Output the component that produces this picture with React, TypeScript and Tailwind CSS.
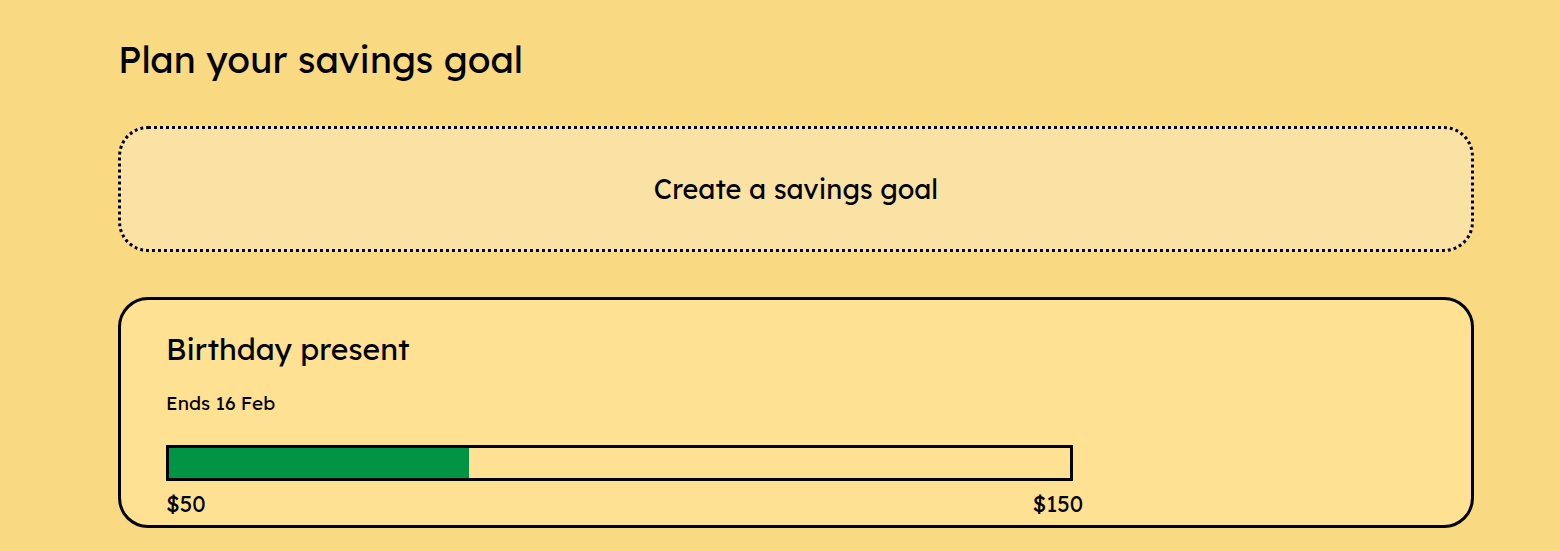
export default function App() {
  return (
    <main className="min-h-screen bg-[#f9d981] pt-9 pr-[86px] pb-6 pl-[118px] font-[Lexend,Inter,sans-serif] font-normal text-black">
      <h1 className="text-[37px] leading-[46px]">Plan your savings goal</h1>
      <button
        type="button"
        className="mt-11 block w-full rounded-[30px] border-3 border-dotted border-black bg-[#fae2a4] py-[42px] text-center text-[27px] leading-9"
      >
        Create a savings goal
      </button>
      <section className="mt-[45px] rounded-[30px] border-3 border-black bg-[#fee193] px-[45px] pt-[29px] pb-[7px]">
        <h2 className="text-[30px] leading-10">Birthday present</h2>
        <p className="mt-[22px] text-[19px] leading-6">Ends 16 Feb</p>
        <div className="w-[72%]">
          <div
            role="progressbar"
            aria-label="Birthday present"
            aria-valuemin={0}
            aria-valuemax={150}
            aria-valuenow={50}
            className="mt-[30px] h-9 border-3 border-black"
          >
            <div className="h-full w-1/3 bg-[#009444]" />
          </div>
          <div className="-mr-[10px] mt-[9px] flex justify-between text-[22px] leading-7">
            <span>$50</span>
            <span>$150</span>
          </div>
        </div>
      </section>
    </main>
  );
}
